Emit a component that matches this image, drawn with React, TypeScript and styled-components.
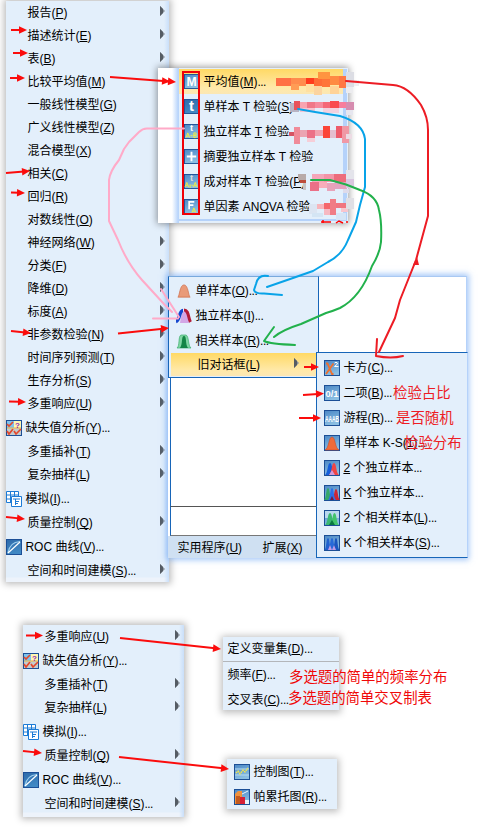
import React from "react";
import styled, { createGlobalStyle, css } from "styled-components";

const Global = createGlobalStyle`
  html, body { margin: 0; background: #fff; }
  body { font-family: "Liberation Sans", "Noto Sans CJK SC", sans-serif; font-size: 12px; color: #000; }
`;

const Desktop = styled.main`
  position: relative;
  width: 484px;
  height: 836px;
  overflow: hidden;
  background: #fff;
`;

const Panel = styled.section<{ $x: number; $y: number; $w: number; $h: number }>`
  position: absolute;
  box-sizing: border-box;
  left: ${(p) => p.$x}px;
  top: ${(p) => p.$y}px;
  width: ${(p) => p.$w}px;
  height: ${(p) => p.$h}px;
  display: flex;
  flex-direction: column;
  background: #e3effb;
`;

const MainMenu = styled(Panel)`
  background: linear-gradient(to right, transparent calc(100% - 5px), #c9dffa), linear-gradient(#e3effb calc(100% - 5px), #edf3fb calc(100% - 4px));
  box-shadow: 0 0 7px 2px rgba(0, 0, 0, 0.27);
`;

const MeansFrame = styled(Panel)`
  background: linear-gradient(to right, #fff 14px, #b9d5fb 20px, #b9d5fb 21px, #e3effb 21px);
  box-shadow: 0 0 7px 1px rgba(0, 0, 0, 0.4);
  padding: 1px 1px 2px 21px;
`;

const MeansList = styled.div`
  display: flex;
  flex-direction: column;
  height: 150px;
  background: #e3effb;
  border-right: 4px solid #b5d2fa;
  border-bottom: 2px solid #b5d2fa;
`;

const NonparametricMenu = styled(Panel)`
  border: 1px solid #1765b8;
  border-top-color: #78a9dd;
  padding: 1px 2px 0 2px;
`;

const LegacyMenu = styled(Panel)`
  border: 1px solid #1765b8;
  border-right-color: #b5d2fa;
  padding-top: 2px;
`;

const Backdrop = styled(Panel)`
  background: #fff;
  border-top: 1px solid #a9c9f3;
  border-right: 1px solid #b5d2fa;
  box-shadow: 0 0 6px 2px rgba(105, 164, 241, 0.6);
`;

const ViewerPane = styled.div`
  box-sizing: border-box;
  height: 230px;
  margin-left: 2px;
  border-left: 1px solid #1765b8;
  border-bottom: 1px solid #555;
`;

const ViewerGap = styled.div`
  box-sizing: border-box;
  height: 29px;
  margin-left: 2px;
  border-left: 1px solid #1765b8;
  border-bottom: 1px solid #777;
`;

const MenuBar = styled.div`
  display: flex;
  align-items: center;
  gap: 21px;
  flex: 1;
  padding: 0 0 1px 10px;
  background: #cfe0f2;
`;

const Popup = styled(Panel)`
  box-shadow: 0 1px 7px 2px rgba(0, 0, 0, 0.25);
`;

const Row = styled.div<{ $h: number; $pad: number; $gap?: number; $hot?: boolean }>`
  box-sizing: border-box;
  display: flex;
  align-items: center;
  flex: none;
  height: ${(p) => p.$h}px;
  gap: ${(p) => p.$gap ?? 4}px;
  padding-left: ${(p) => p.$pad}px;
  white-space: nowrap;
  line-height: 16px;
  ${(p) =>
    p.$hot &&
    css`
      background: linear-gradient(#ffd965, #ffe9a9 75%, #fbe7b4);
    `}
`;

const Text = styled.span`
  margin-left: -0.6px;
  u { text-decoration-thickness: 1px; text-underline-offset: 1px; text-decoration-skip-ink: none; }
`;

const Dots = styled.span`
  letter-spacing: -0.5px;
`;

const Caret = styled.svg<{ $right: number }>`
  margin: -3px ${(p) => p.$right}px 0 auto;
  flex: none;
`;

const Glyph = styled.svg`
  flex: none;
`;

const Divider = styled.hr`
  flex: none;
  width: 100%;
  height: 1px;
  margin: 0;
  border: 0;
  background: #b3b6ba;
`;

const Overlay = styled.svg`
  position: absolute;
  inset: 0;
  pointer-events: none;
`;

const Note = styled.span<{ $x: number; $y: number; $color?: string }>`
  position: absolute;
  left: ${(p) => p.$x}px;
  top: ${(p) => p.$y}px;
  color: ${(p) => p.$color ?? "#ed1c24"};
  font-size: 14.4px;
  line-height: 20px;
  white-space: nowrap;
`;

/** Renders a menu caption; the character after "&" is the underlined shortcut. */
function Label({ children }: { children: string }) {
  const dotted = children.endsWith("...");
  const body = dotted ? children.slice(0, -3) : children;
  const at = body.indexOf("&");
  return (
    <Text>
      {at < 0 ? body : (
        <>
          {body.slice(0, at)}
          <u>{body[at + 1]}</u>
          {body.slice(at + 2)}
        </>
      )}
      {dotted && <Dots>...</Dots>}
    </Text>
  );
}

function SubmenuMark({ right = 4 }: { right?: number }) {
  return (
    <Caret $right={right} width="5" height="10" viewBox="0 0 5 10">
      <path d="M0 0L5 5L0 10Z" fill="#8a929b" />
      <path d="M0 0L3 3V7L0 10Z" fill="#555c64" />
    </Caret>
  );
}

type IconName =
  | "missing" | "simulate" | "roc" | "m" | "t" | "tab" | "plus" | "taa" | "fa"
  | "one" | "indep" | "related" | "chi" | "binary" | "runs" | "ks"
  | "two" | "kind" | "tworel" | "krel" | "control" | "pareto";

const bell = (cx: number, w: number, top: number) =>
  `M${cx - w} 15C${cx - w * 0.4} 13 ${cx - w * 0.5} ${top} ${cx} ${top}S${cx + w * 0.4} 13 ${cx + w} 15Z`;

const art: Record<IconName, React.ReactNode> = {
  missing: (
    <>
      <rect x="1" y="1" width="14" height="14" fill="#7ec3ee" />
      <path d="M8 1h7v7H8z" fill="#fff6b0" />
      <path d="M1 8h7v7H1zM8 8h7v7H8z" fill="#c3ccd0" />
      <path d="M1 4l2 2 4-4M1 11l2 3 4-5M8 11l2 3 5-5" stroke="#e4472b" strokeWidth="1.7" fill="none" />
      <path d="M1 8h14" stroke="#edb440" />
      <text x="9" y="7.500" fontSize="8" fontWeight="bold" fill="#8a28b8">?</text>
    </>
  ),
  simulate: (
    <>
      <path d="M.5.5h12v11H.5zM.5 4h12M.5 8h12M4.5.5v11M8.5.5v11" fill="#fff" stroke="#1c7bd6" />
      <path d="M5.500 5.500h10v10h-10z" fill="#fff" stroke="#1c7bd6" />
      <path d="M7 8h7M9 10.500h4M9 12.500h3M9.500 8v6" stroke="#1c7bd6" fill="none" />
    </>
  ),
  roc: (
    <>
      <path d="M2 14C3 7 6 3 14 2.500" fill="none" stroke="#9fd0ee" strokeWidth="1.200" />
      <path d="M2 14L14 3" stroke="#fff" strokeWidth="1.200" />
    </>
  ),
  m: <text x="8" y="12.500" fontSize="13" fontWeight="bold" fill="#fff" textAnchor="middle">M</text>,
  t: <text x="8" y="13" fontSize="16" fontWeight="bold" fill="#fff" textAnchor="middle">t</text>,
  tab: (
    <>
      <text x="8" y="7.500" fontSize="10" fontWeight="bold" fill="#fff" textAnchor="middle">t</text>
      <path d="M2 14.500L4 9.500L6 14.500M3 13h2M7 12.500h2M10.500 9.500v5h2q2-1.200 0-2.500h-2h2q1.500-1.200 0-2.500z" stroke="#f5f03c" fill="none" />
    </>
  ),
  plus: <path d="M8 3v10M3 8h10" stroke="#fff" strokeWidth="2" />,
  taa: (
    <>
      <text x="8" y="7.500" fontSize="10" fontWeight="bold" fill="#ddd" textAnchor="middle">t</text>
      <path d="M1 14L3 9L5 14M2 12.500h2M6.500 11v4M8 12h1.500M10 14l2-5 2 5M11 12.500h2" stroke="#f5f03c" fill="none" />
    </>
  ),
  fa: (
    <>
      <path d="M5.500 11V3H11M5.500 6.500H10" stroke="#fff" strokeWidth="1.800" fill="none" />
      <path d="M8.500 14.500l2-5 2 5M9.500 13h2" stroke="#f5f03c" fill="none" />
    </>
  ),
  one: <path d="M1 15C3 14 3 1 8 1S13 14 15 15Z" fill="#e99a79" stroke="#cf6943" strokeWidth=".8" />,
  indep: (
    <>
      <path d="M4 15C6 3 8 1 10 4s2 8 3 11Z" fill="#d3a6e6" />
      <path d="M0 13.500c4-1 3-11 7-11" fill="none" stroke="#1446cf" strokeWidth="3.500" />
      <path d="M8 2c5 0 4 8 6.500 12" fill="none" stroke="#b31b38" strokeWidth="3" />
    </>
  ),
  related: (
    <>
      <path d="M1 15C4 13 2 3 5 2h5c3 1 2 11 5 13Z" fill="#81d6a4" stroke="#3daf70" strokeWidth=".7" />
      <path d="M4 15C7 11 5 3 8 3s1 8 4 12Z" fill="#148546" />
    </>
  ),
  chi: (
    <>
      <path d="M2 3.500h1.500L8 14h1.500M9.500 3.500L2 14" stroke="#f06f2d" strokeWidth="1.800" fill="none" />
      <path d="M10.500 3q1.500-1.500 3 0q0 1.500-3 3.500h4" stroke="#fff" fill="none" />
    </>
  ),
  binary: <text x="1.500" y="11.500" fontSize="9" fontWeight="bold" fill="#fff" textLength="13" lengthAdjust="spacingAndGlyphs">0/1</text>,
  runs: <text x="1" y="11.500" fontSize="9" fontWeight="bold" fill="#fff" textLength="14" lengthAdjust="spacingAndGlyphs">AAAB</text>,
  ks: <path d={bell(8, 7, 2)} fill="#ee6b3a" stroke="#cf421d" strokeWidth=".5" />,
  two: (
    <>
      <path d={bell(6, 5, 3)} fill="#145edb" />
      <path d={bell(10, 5, 3)} fill="#ef4545" />
      <path d="M5 15l3-5 3 5z" fill="#d09ad9" />
    </>
  ),
  kind: (
    <>
      <path d={bell(4, 4, 3)} fill="#35a76c" />
      <path d={bell(12, 4, 4)} fill="#cd2634" />
      <path d={bell(8, 4, 3)} fill="#2c70e8" />
      <path d="M6 15l2-4 2 4z" fill="#701d44" />
    </>
  ),
  tworel: (
    <>
      <path d="M1 1h14v7H1z" fill="#b9d8ee" />
      <path d={bell(6, 5, 3)} fill="#3bb873" />
      <path d={bell(10.5, 4.5, 3)} fill="#42c46b" />
      <path d="M5 15l3-5 3 5z" fill="#08783f" />
    </>
  ),
  krel: (
    <>
      <path d={bell(4, 3.5, 3)} fill="#2160cf" />
      <path d={bell(8, 4, 3)} fill="#2769d8" />
      <path d={bell(12, 3.5, 3)} fill="#1955bf" />
      <path d="M4 15l2-5 2 5zM8 15l2-5 2 5z" fill="#bd9be6" />
    </>
  ),
  control: (
    <>
      <path d="M1 5h14M1 11h14" stroke="#b8dcf1" />
      <path d="M2 9l2-2 2 3 3-4 2 2 3-4" fill="none" stroke="#f4e64a" strokeWidth="1.300" strokeDasharray="2 .6" />
    </>
  ),
  pareto: (
    <>
      <path d="M1 5l3-3h4v13H1z" fill="#ef923e" />
      <path d="M2 7h4v8H2z" fill="#c45a1d" />
      <path d="M6 8h5v7H6z" fill="#d71f36" />
      <path d="M11 11h4v4h-4z" fill="#e6f1f7" />
      <path d="M8 5l6-3" stroke="#f0f7fd" />
    </>
  ),
};

const unframed: IconName[] = ["simulate", "one", "indep", "related"];

function Icon({ name, size = 16 }: { name: IconName; size?: number }) {
  const id = `tile-${name}`;
  const dark = name === "t" || name === "roc";
  return (
    <Glyph width={size} height={size} viewBox="0 0 16 16">
      {!unframed.includes(name) && (
        <>
          <defs>
            <linearGradient id={id} x1="0" y1="0" x2=".3" y2="1">
              <stop offset="0" stopColor={dark ? "#2e6aaa" : "#4b88c6"} />
              <stop offset="1" stopColor={dark ? "#4189c4" : "#8bbfe3"} />
            </linearGradient>
          </defs>
          <rect x=".5" y=".5" width="15" height="15" fill={`url(#${id})`} stroke="#1c4f96" />
        </>
      )}
      {art[name]}
    </Glyph>
  );
}

type Item = { text: string; icon?: IconName; sub?: boolean };

const tail: Item[] = [
  { text: "多重响应(&U)", sub: true },
  { text: "缺失值分析(&Y)...", icon: "missing" },
  { text: "多重插补(&T)", sub: true },
  { text: "复杂抽样(&L)", sub: true },
  { text: "模拟(&I)...", icon: "simulate" },
  { text: "质量控制(&Q)", sub: true },
  { text: "ROC 曲线(&V)...", icon: "roc" },
  { text: "空间和时间建模(&S)...", sub: true },
];

const analyze: Item[] = [
  "报告(&P)", "描述统计(&E)", "表(&B)", "比较平均值(&M)", "一般线性模型(&G)", "广义线性模型(&Z)",
  "混合模型(&X)", "相关(&C)", "回归(&R)", "对数线性(&O)", "神经网络(&W)", "分类(&F)", "降维(&D)",
  "标度(&A)", "非参数检验(&N)", "时间序列预测(&T)", "生存分析(&S)",
].map((text) => ({ text, sub: true }));

const means: Item[] = [
  { text: "平均值(&M)...", icon: "m" },
  { text: "单样本 T 检验(&S)", icon: "t" },
  { text: "独立样本 &T 检验.", icon: "tab" },
  { text: "摘要独立样本 T 检验", icon: "plus" },
  { text: "成对样本 T 检验(&P)", icon: "taa" },
  { text: "单因素 AN&OVA 检验", icon: "fa" },
];

const legacy: Item[] = [
  { text: "卡方(&C)...", icon: "chi" },
  { text: "二项(&B)...", icon: "binary" },
  { text: "游程(&R)...", icon: "runs" },
  { text: "单样本 K-S(&1)...", icon: "ks" },
  { text: "&2 个独立样本...", icon: "two" },
  { text: "&K 个独立样本...", icon: "kind" },
  { text: "2 个相关样本(&L)...", icon: "tworel" },
  { text: "K 个相关样本(&S)...", icon: "krel" },
];

function AnalyzeRows({ items }: { items: Item[] }) {
  return (
    <>
      {items.map((it) => (
        <Row key={it.text} $h={it.icon ? 25 : 23} $pad={it.icon ? 0 : 22}>
          {it.icon && <Icon name={it.icon} />}
          <Label>{it.text}</Label>
          {it.sub && <SubmenuMark />}
        </Row>
      ))}
    </>
  );
}

function Arrow({ a, double }: { a: [number, number, number, number]; double?: boolean }) {
  const [x1, y1, x2, y2] = a;
  const angle = (Math.atan2(y2 - y1, x2 - x1) * 180) / Math.PI;
  const len = Math.hypot(x2 - x1, y2 - y1);
  return (
    <g transform={`translate(${x1} ${y1}) rotate(${angle})`} fill="#fb0c0c">
      <path d={`M0 0H${len - 6}`} stroke="#fb0c0c" strokeWidth="2" />
      <path d={`M${len} 0l-8-3.800v7.600z`} />
      {double && <path d={`M${len - 6} 0l-8-3.800v7.600z`} />}
    </g>
  );
}

const arrows: [number, number, number, number][] = [
  [11, 30, 27, 30], [13, 53, 28, 53], [10, 78, 25, 78], [6, 173, 30, 171], [11, 192.5, 25, 193],
  [11, 331, 31, 333], [118, 333.5, 169, 328], [9, 401.5, 26, 402], [6, 517, 25, 519],
  [304, 367, 319, 367], [303, 395, 324, 393.5], [299, 418, 321, 418],
  [26, 635.5, 43, 635.5], [120, 638, 221, 649], [23, 751, 42, 753], [119, 757, 229, 769],
];

/* x, y, width, height, colour */
const mosaic: [number, number, number, number, string][] = [
  [276, 78, 15, 8, "#ff7045"], [291, 78, 15, 8, "#ff8c4d"], [306, 78, 8, 6, "#ff3b1c"], [314, 78, 8, 8, "#ff6b35"],
  [318, 72, 12, 7, "#ff9440"], [322, 79, 8, 8, "#ff7438"], [330, 76, 9, 9, "#ff8a42"], [339, 76, 7, 12, "#ff7743"],
  [291, 84, 8, 6, "#ff9c55"], [306, 84, 8, 8, "#ffe0a2"], [314, 86, 8, 9, "#fbd4a0"], [330, 86, 9, 8, "#ffd398"],
  [346, 72, 8, 15, "#dcdde4"], [354, 80, 5, 6, "#efeff1"], [346, 87, 7, 6, "#ececef"],
  [290, 103, 9, 9, "#b8b4c4"], [294, 101, 6, 9, "#e8525a"], [300, 102, 8, 6, "#f8a4b0"], [307, 102, 8, 9, "#f07888"],
  [315, 102, 8, 6, "#f68a9d"], [323, 102, 7, 6, "#f56878"], [330, 101, 9, 7, "#f94a50"], [339, 102, 7, 6, "#f77d9c"],
  [346, 102, 8, 8, "#d68caf"], [300, 108, 15, 4, "#f7c2cf"], [323, 108, 16, 5, "#f2d1df"], [346, 110, 7, 5, "#e6e6ef"],
  [289, 132, 7, 4, "#d65464"], [294, 127, 6, 17, "#f08b99"], [300, 130, 7, 7, "#eba4b2"], [307, 130, 8, 8, "#ec7187"],
  [315, 130, 8, 6, "#f1a2af"], [323, 126, 7, 12, "#fb4538"], [336, 126, 6, 12, "#ed5b6b"], [342, 126, 7, 17, "#f098a5"],
  [330, 130, 6, 8, "#e4bdce"], [307, 138, 8, 4, "#f6ced8"], [346, 134, 6, 5, "#eddbe4"],
  [298, 174, 8, 6, "#b8aaa8"], [300, 180, 6, 3, "#bd4c3a"], [303, 183, 3, 7, "#c8c3c4"],
  [312, 174, 12, 8, "#f4a6b9"], [310, 182, 9, 9, "#eb7087"], [319, 182, 8, 6, "#f8adba"], [324, 174, 10, 8, "#f394a7"],
  [334, 174, 12, 8, "#ed6c7c"], [327, 183, 8, 8, "#e8a3ba"], [335, 182, 12, 7, "#e4a2c0"], [346, 170, 8, 9, "#e4e4eb"],
  [346, 179, 8, 9, "#d9c6df"], [343, 189, 6, 4, "#dedbea"],
  [309, 204, 8, 10, "#dce5f2"], [317, 204, 7, 5, "#f7b5bb"], [324, 203, 6, 6, "#f5686c"], [330, 199, 6, 16, "#f07c85"],
  [336, 203, 12, 5, "#f07580"], [341, 208, 7, 4, "#f8c5ce"], [324, 209, 6, 6, "#f6b8c1"], [346, 198, 8, 11, "#dfdfe5"],
  [312, 213, 11, 4, "#d4e5f4"], [336, 213, 10, 7, "#d5e5f6"],
];

function Annotations() {
  return (
    <Overlay width="484" height="836" viewBox="0 0 484 836" fill="none">
      {mosaic.map(([x, y, w, h, c], i) => (
        <rect key={i} x={x} y={y} width={w} height={h} fill={c} shapeRendering="crispEdges" />
      ))}
      <path d="M321 222h10M323 220v3M336 223l3-2 4 2M346 222h2" stroke="#f00" strokeWidth="1.500" />
      <rect x="183" y="72" width="16" height="142" stroke="#f00008" strokeWidth="2" />
      <g strokeWidth="2" strokeLinecap="round" strokeLinejoin="round">
        <g stroke="#ffaac8">
          <path d="M184 128.500H148Q143 128 139 132L129 142L124 149L119 160Q110 171 109 180V221L118 240Q127 263 142 280L164 304L172 312" />
          <path d="M161 289L179 317M153 318.500H178" />
        </g>
        <path d="M298 109L315 112L340 116Q363 123 365 139V187L360 205L356 222L348 240Q342 255 328 262L313 271L293 278L267 287" stroke="#08a3e8" />
        <path d="M268 276Q258 274 256 284L254 290Q255 294 264 293.500L282 295" stroke="#08a3e8" />
        <path d="M311 180H330L346 184.500L360 190Q377 196 379 210Q382 222 381 242Q380 253 372 266Q361 297 340 308Q333 311 326 313L301 324Q282 330 274 337" stroke="#22b14c" />
        <path d="M274 327L264 341Q270 344 295 345" stroke="#22b14c" />
        <path d="M346 81L393 85Q408 86 421 105Q428 117 428 130V216L416 260L400 300L395 318L379 352" stroke="#ed1c24" />
        <path d="M377 339L376 356Q391 359 403 356" stroke="#ed1c24" />
      </g>
      <path d="M417 257l-4 8h6z" fill="#ed1c24" />
      {arrows.map((a) => (
        <Arrow key={a.join()} a={a} />
      ))}
      <Arrow a={[110, 77, 176, 82]} double />
    </Overlay>
  );
}

export default function App() {
  return (
    <>
      <Global />
      <Desktop>
        <MainMenu as="nav" $x={6} $y={1} $w={163} $h={581}>
          <AnalyzeRows items={[...analyze, ...tail]} />
        </MainMenu>

        <MeansFrame $x={158} $y={68} $w={190} $h={155}>
          <MeansList>
            {means.map((it, i) => (
              <Row key={it.text} $h={25} $pad={5} $gap={5} $hot={i === 0}>
                <Icon name={it.icon!} size={15} />
                <Label>{it.text}</Label>
              </Row>
            ))}
          </MeansList>
        </MeansFrame>

        <Backdrop $x={168} $y={276} $w={299} $h={282}>
          <ViewerPane />
          <ViewerGap />
          <MenuBar>
            <Label>实用程序(&U)</Label>
            <Label>扩展(&X)</Label>
          </MenuBar>
        </Backdrop>
        <NonparametricMenu $x={168} $y={276} $w={151} $h={102}>
          <Row $h={25} $pad={6} $gap={5}><Icon name="one" size={14} /><Label>单样本(&O)...</Label></Row>
          <Row $h={25} $pad={5} $gap={4}><Icon name="indep" /><Label>独立样本(&I)...</Label></Row>
          <Row $h={25} $pad={5} $gap={4}><Icon name="related" /><Label>相关样本(&R)...</Label></Row>
          <Row $h={23} $pad={27} $hot><Label>旧对话框(&L)</Label><SubmenuMark right={17} /></Row>
        </NonparametricMenu>
        <LegacyMenu $x={316} $y={352} $w={152} $h={206}>
          {legacy.map((it) => (
            <Row key={it.text} $h={25} $pad={7} $gap={4}>
              <Icon name={it.icon!} />
              <Label>{it.text}</Label>
            </Row>
          ))}
        </LegacyMenu>

        <MainMenu as="nav" $x={23} $y={625} $w={161} $h={192}>
          <AnalyzeRows items={tail} />
        </MainMenu>
        <Popup $x={223} $y={637} $w={116} $h={73}>
          <Row $h={24} $pad={5}><Label>定义变量集(&D)...</Label></Row>
          <Divider />
          <Row $h={26} $pad={5}><Label>频率(&F)...</Label></Row>
          <Row $h={24} $pad={5}><Label>交叉表(&C)...</Label></Row>
        </Popup>
        <Popup $x={227} $y={759} $w={110} $h={50}>
          <Row $h={25} $pad={7}><Icon name="control" /><Label>控制图(&T)...</Label></Row>
          <Row $h={25} $pad={7}><Icon name="pareto" /><Label>帕累托图(&R)...</Label></Row>
        </Popup>

        <Annotations />
        <Note $x={393} $y={383}>检验占比</Note>
        <Note $x={396} $y={408}>是否随机</Note>
        <Note $x={404} $y={433}>检验分布</Note>
        <Note $x={289} $y={667} $color="#f00808">多选题的简单的频率分布</Note>
        <Note $x={288} $y={688} $color="#f00808">多选题的简单交叉制表</Note>
      </Desktop>
    </>
  );
}
